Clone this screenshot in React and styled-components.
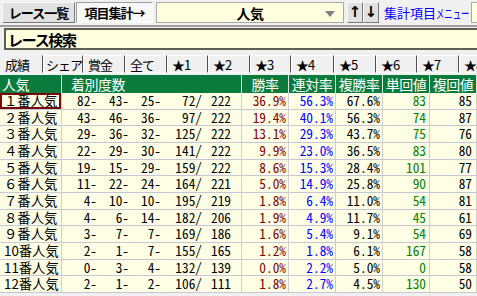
import React from 'react';
import styled, { createGlobalStyle } from 'styled-components';

const Global = createGlobalStyle`
  html, body { margin: 0; padding: 0; background: #f0f0f0; overflow: hidden; }
  body { font-family: "Noto Sans CJK JP", "Noto Sans", sans-serif; }
`;

const Page = styled.div`
  width: 477px;
  height: 296px;
  overflow: hidden;
  background: #f0f0f0;
  font-family: "Noto Sans CJK JP", sans-serif;
`;

const Toolbar = styled.div`
  display: flex;
  align-items: flex-start;
  height: 25px;
  box-sizing: border-box;
  padding: 2px 0 0 2px;
`;

const ToolButton = styled.div`
  box-sizing: border-box;
  flex: none;
  height: 21px;
  width: ${p => p.$w}px;
  margin-right: ${p => p.$mr || 0}px;
  font-weight: bold;
  font-size: ${p => p.$fs || 13}px;
  letter-spacing: ${p => p.$ls ?? -1}px;
  color: #000;
  background: ${p => (p.$pressed ? '#f8f8f8' : '#e1e1e1')};
  border: 1px solid;
  border-color: ${p => (p.$pressed ? '#a0a0a0 #ffffff #ffffff #a0a0a0' : '#f8f8f8 #7a7a7a #7a7a7a #f8f8f8')};
  display: flex;
  align-items: center;
  justify-content: center;
  line-height: 1;
  white-space: nowrap;
`;

const ArrowGlyph = styled.span`
  font-family: "DejaVu Sans", sans-serif;
  font-weight: bold;
  font-size: 15px;
  letter-spacing: 0;
`;

const Combo = styled.div`
  box-sizing: border-box;
  flex: none;
  width: 188px;
  height: 21px;
  margin: 0 3px 0 3px;
  background: #ffffe0;
  border: 1px solid #a8a8a8;
  display: grid;
  grid-template-columns: 18px 1fr 18px;
  align-items: center;
  font-weight: bold;
  font-size: 14px;
  line-height: 1;
`;

const ComboText = styled.span`
  text-align: center;
  letter-spacing: -0.5px;
`;

const ComboArrow = styled.span`
  width: 0;
  height: 0;
  border-left: 5px solid transparent;
  border-right: 5px solid transparent;
  border-top: 6px solid #808080;
  margin-top: 2px;
`;

const MenuLink = styled.span`
  flex: none;
  width: 84px;
  margin-left: 5px;
  height: 21px;
  display: flex;
  align-items: center;
  color: #0000ff;
  font-size: 13px;
  line-height: 1;
  white-space: nowrap;
`;

const Kana = styled.span`
  display: inline-block;
  transform: scaleX(0.64);
  transform-origin: left center;
  letter-spacing: 0;
`;

const SideInput = styled.div`
  flex: none;
  margin-left: 3px;
  width: 20px;
  height: 21px;
  box-sizing: border-box;
  background: #ffffe0;
  border: 1px solid #a8a8a8;
`;

const Divider = styled.div`
  height: 3px;
  border-top: 2px solid #a0a0a0;
  box-sizing: border-box;
`;

const SearchBox = styled.div`
  box-sizing: border-box;
  height: 22px;
  margin-left: 4px;
  background: #ffffe0;
  border: 2px solid #5e5e52;
  border-right: none;
  display: flex;
  align-items: center;
  padding-left: 2px;
  font-weight: bold;
  font-size: 15px;
  letter-spacing: -1.3px;
  line-height: 1;
`;

const TabRow = styled.div`
  display: flex;
  height: 18px;
  margin-top: 5px;
  margin-bottom: 2px;
`;

const Tab = styled.div`
  flex: none;
  box-sizing: border-box;
  width: ${p => p.$w}px;
  height: 18px;
  padding-left: ${p => p.$pl ?? 4}px;
  display: flex;
  align-items: center;
  font-size: 13px;
  letter-spacing: -1px;
  line-height: 1;
  white-space: nowrap;
  color: #000;
  background: #f0f0f0;
  border-left: 1px solid ${p => (p.$active ? '#f0f0f0' : '#ffffff')};
  border-top: 1px solid ${p => (p.$active ? '#f0f0f0' : '#ffffff')};
  border-right: 1px solid #505050;
  border-bottom: 1px solid ${p => (p.$active ? '#f0f0f0' : '#ffffff')};
`;

const Grid = styled.div`
  display: grid;
  grid-template-columns: 62px 180px 47px 47px 47px 47px 47px;
`;

const HeadCell = styled.div`
  box-sizing: border-box;
  height: 18px;
  background: #0a7b3d;
  color: #ffffff;
  font-size: 14px;
  letter-spacing: -0.5px;
  line-height: 1;
  display: flex;
  align-items: center;
  justify-content: ${p => (p.$left ? 'flex-start' : 'center')};
  padding-left: ${p => p.$pl || 0}px;
  border-right: 1px solid #d8e8dc;
  white-space: nowrap;
`;

const Cell = styled.div`
  box-sizing: border-box;
  height: 16.67px;
  background: #ffffe6;
  border-right: 1px solid #cfcfcf;
  border-bottom: 1px solid #c6c6d6;
  font-size: 13.33px;
  font-feature-settings: "hwid";
  line-height: 1;
  color: ${p => p.$color || '#000'};
  display: flex;
  align-items: center;
  justify-content: flex-end;
  padding-right: ${p => p.$pr ?? 3}px;
  white-space: nowrap;
`;

const LabelCell = styled(Cell)`
  justify-content: flex-start;
  padding-left: 4px;
  font-feature-settings: normal;
  ${p => p.$selected && `box-shadow: inset 0 0 0 2px #7a0a0a;`}
`;

const CountCell = styled(Cell)`
  justify-content: flex-start;
  padding-right: 0;
`;

const Seg = styled.span`
  display: inline-block;
  width: ${p => p.$w}px;
  text-align: right;
  flex: none;
`;

const rows = [
  ['１番人気', 82, 43, 25, 72, 222, '36.9%', '56.3%', '67.6%', 83, 85],
  ['２番人気', 43, 46, 36, 97, 222, '19.4%', '40.1%', '56.3%', 74, 87],
  ['３番人気', 29, 36, 32, 125, 222, '13.1%', '29.3%', '43.7%', 75, 76],
  ['４番人気', 22, 29, 30, 141, 222, '9.9%', '23.0%', '36.5%', 83, 80],
  ['５番人気', 19, 15, 29, 159, 222, '8.6%', '15.3%', '28.4%', 101, 77],
  ['６番人気', 11, 22, 24, 164, 221, '5.0%', '14.9%', '25.8%', 90, 87],
  ['７番人気', 4, 10, 10, 195, 219, '1.8%', '6.4%', '11.0%', 54, 81],
  ['８番人気', 4, 6, 14, 182, 206, '1.9%', '4.9%', '11.7%', 45, 61],
  ['９番人気', 3, 7, 7, 169, 186, '1.6%', '5.4%', '9.1%', 54, 69],
  ['10番人気', 2, 1, 7, 155, 165, '1.2%', '1.8%', '6.1%', 167, 58],
  ['11番人気', 0, 3, 4, 132, 139, '0.0%', '2.2%', '5.0%', 0, 58],
  ['12番人気', 2, 1, 2, 106, 111, '1.8%', '2.7%', '4.5%', 130, 50],
];

const tabs = ['成績', 'シェア', '賞金', '全て', '★1', '★2', '★3', '★4', '★5', '★6', '★7', '★8'];
const tabWidths = [43, 40, 42, 42, 41, 42, 41, 43, 42, 41, 42, 42];

export default function App() {
  return (
    <Page>
      <Global />
      <Toolbar>
        <ToolButton $w={73} $mr={1}>レース一覧</ToolButton>
        <ToolButton $w={77} $pressed>項目集計→</ToolButton>
        <Combo>
          <span />
          <ComboText>人気</ComboText>
          <ComboArrow />
        </Combo>
        <ToolButton $w={16} $ls={0}><ArrowGlyph>↑</ArrowGlyph></ToolButton>
        <ToolButton $w={16} $ls={0}><ArrowGlyph>↓</ArrowGlyph></ToolButton>
        <MenuLink>集計項目<Kana>メニュー</Kana></MenuLink>
        <SideInput />
      </Toolbar>
      <Divider />
      <SearchBox>レース検索</SearchBox>
      <TabRow>
        {tabs.map((t, i) => (
          <Tab key={t} $w={tabWidths[i]} $active={i === 0} $pl={i === 1 ? 2 : 4}>{t}</Tab>
        ))}
      </TabRow>
      <Grid>
        <HeadCell $left $pl={2}>人気</HeadCell>
        <HeadCell $left $pl={9}>着別度数</HeadCell>
        <HeadCell>勝率</HeadCell>
        <HeadCell>連対率</HeadCell>
        <HeadCell>複勝率</HeadCell>
        <HeadCell>単回値</HeadCell>
        <HeadCell>複回値</HeadCell>
        {rows.map((r, i) => (
          <React.Fragment key={r[0]}>
            <LabelCell $selected={i === 0}>{r[0]}</LabelCell>
            <CountCell>
              <Seg $w={35}>{r[1]}-</Seg>
              <Seg $w={32}>{r[2]}-</Seg>
              <Seg $w={32}>{r[3]}-</Seg>
              <Seg $w={41}>{r[4]}/</Seg>
              <Seg $w={29}>{r[5]}</Seg>
            </CountCell>
            <Cell $color="#800000" $pr={2}>{r[6]}</Cell>
            <Cell $color="#0000ff" $pr={2}>{r[7]}</Cell>
            <Cell $pr={2}>{r[8]}</Cell>
            <Cell $color="#008000" $pr={3}>{r[9]}</Cell>
            <Cell $pr={4}>{r[10]}</Cell>
          </React.Fragment>
        ))}
      </Grid>
    </Page>
  );
}
